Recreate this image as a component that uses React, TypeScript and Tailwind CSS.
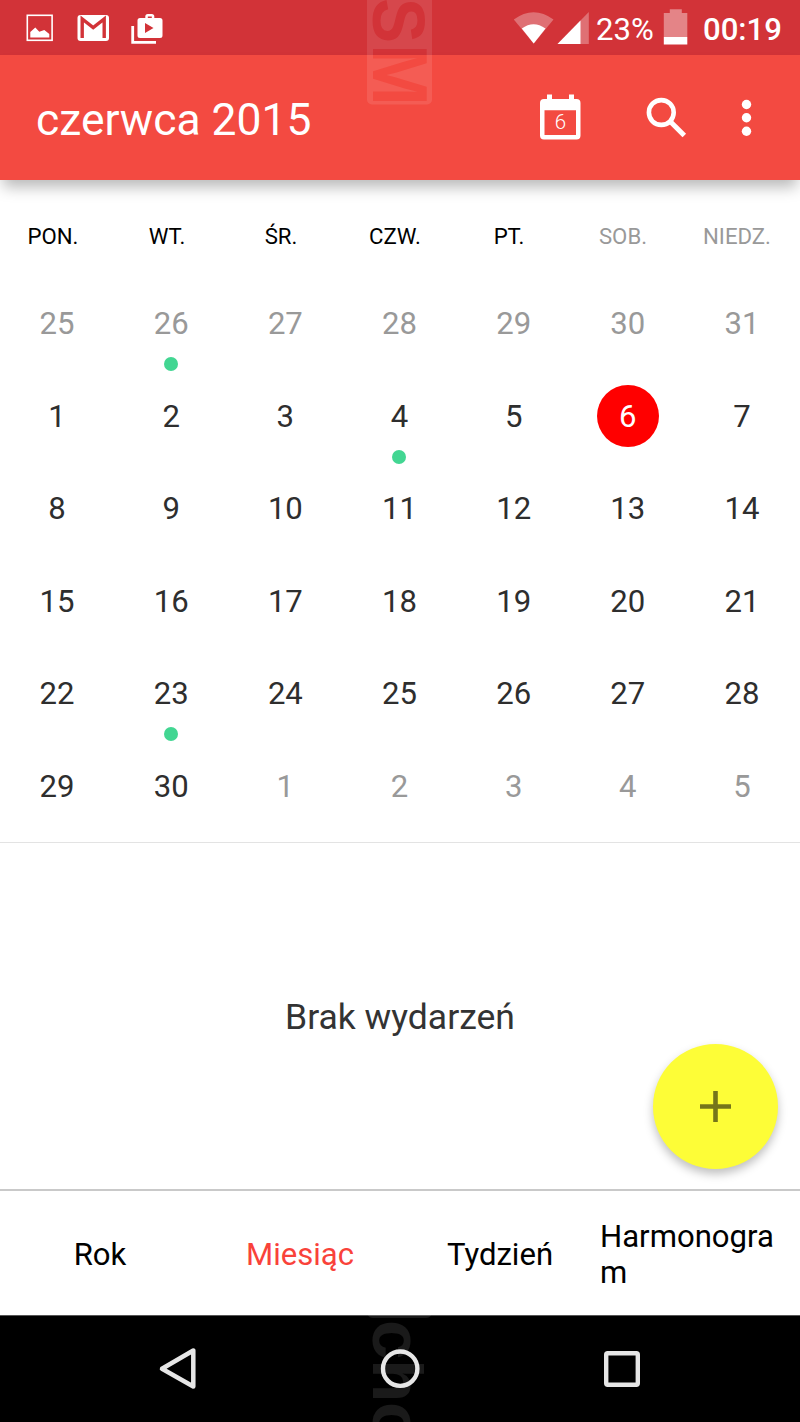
import React from "react";

const weekDays = ["PON.", "WT.", "ŚR.", "CZW.", "PT.", "SOB.", "NIEDZ."];

const weeks = [
  [25, 26, 27, 28, 29, 30, 31],
  [1, 2, 3, 4, 5, 6, 7],
  [8, 9, 10, 11, 12, 13, 14],
  [15, 16, 17, 18, 19, 20, 21],
  [22, 23, 24, 25, 26, 27, 28],
  [29, 30, 1, 2, 3, 4, 5],
];

// "week-column" of the days that have an event
const events = ["0-1", "1-3", "4-1"];

const StatusBar = () => {
  return (
    <div className="flex h-[55px] items-start justify-between bg-[#d23338] text-white">
      <svg width="190" height="55" viewBox="0 0 190 55">
        <rect x="27.3" y="15.3" width="24.8" height="25" fill="none" stroke="white" strokeWidth="1.6" />
        <path d="M30.3 37.5V32l5-4.5 4 4.3 5-1.8 5 4v3.5z" fill="white" />
        <rect x="77.5" y="15" width="31.5" height="26" rx="3" fill="white" />
        <path
          d="M82.2 38V19l11 8.500 11-8.500V38"
          fill="none"
          stroke="#d23338"
          strokeWidth="3.4"
        />
        <path d="M132.7 26v16.3H156" fill="none" stroke="white" strokeWidth="2.8" />
        <path
          fill="white"
          fillRule="evenodd"
          d="M140 18h5.3v-1.5q0-2.5 2.5-2.5h4q2.5 0 2.5 2.5V18h5.7q2.5 0 2.5 2.5V35.5q0 2.5-2.5 2.5H140q-2.5 0-2.5-2.5V20.5q0-2.5 2.5-2.5zM147.8 18h4v-1.500h-4zM145 23v10l8.500-5z"
        />
      </svg>
      <div className="flex h-[55px] items-start">
        <svg width="80" height="55" viewBox="510 0 80 55">
          <path d="M513.8 19.5Q533.5 5 553.5 19.5L533.7 43.5z" fill="white" fillOpacity="0.3" />
          <path d="M521.8 28.5Q533.5 20 545.5 28.5L533.7 43.5z" fill="white" />
          <path d="M588.8 12v32H557.5z" fill="white" fillOpacity="0.3" />
          <path d="M580.5 20.5V44H557.5z" fill="white" />
        </svg>
        <span className="ml-[6px] w-[67px] text-[31.1px] leading-[60px]">23%</span>
        <svg width="26" height="55" viewBox="663 0 26 55">
          <path d="M663.8 13h6V9.2h12V13h5.5v24h-23.5z" fill="white" fillOpacity="0.4" />
          <rect x="663.8" y="37" width="23.5" height="7.5" fill="white" />
        </svg>
        <span className="ml-[14px] w-[97px] text-[31.1px] font-medium leading-[60px]">00:19</span>
      </div>
    </div>
  );
};

const AppBar = () => {
  return (
    <div className="relative z-10 flex h-[125px] items-start justify-between bg-[#f34a41] text-white shadow-[0_10px_14px_-3px_rgba(0,0,0,0.28)]">
      <h1 className="pl-[36px] text-[44.4px] font-normal leading-[131px]">czerwca 2015</h1>
      <svg width="280" height="125" viewBox="520 55 280 125">
        <path
          fill="white"
          fillRule="evenodd"
          d="M544 99h3v-4.500h5V99h17v-4.500h5V99h2.500q4 0 4 4v32.500q0 4-4 4H544q-4 0-4-4V103q0-4 4-4zM544.500 110.300v24.700h31.500v-24.700z"
        />
        <text x="560.5" y="129" textAnchor="middle" fontSize="20.5" fontWeight="300" fill="white">
          6
        </text>
        <circle cx="661.3" cy="112.5" r="12.4" fill="none" stroke="white" strokeWidth="4.6" />
        <path d="M671 122.200l13.300 13.300" stroke="white" strokeWidth="5" />
        <circle cx="746.5" cy="104.5" r="4.7" fill="white" />
        <circle cx="746.5" cy="117.8" r="4.7" fill="white" />
        <circle cx="746.5" cy="131.2" r="4.7" fill="white" />
      </svg>
    </div>
  );
};

const Day = ({ day, week, col }: { day: number; week: number; col: number }) => {
  const outside = (week === 0 && day > 20) || (week === 5 && day < 20);
  const today = week === 1 && day === 6;
  return (
    <div className="relative flex items-center justify-center">
      <span
        className={
          today
            ? "flex size-[62px] items-center justify-center rounded-full bg-[#ff0000] pt-px text-white"
            : outside
              ? "text-[#999999]"
              : "text-[#2e2e2e]"
        }
      >
        {day}
      </span>
      {events.includes(`${week}-${col}`) && (
        <span className="absolute left-1/2 top-[80px] size-[14px] -translate-x-1/2 rounded-full bg-[#42d692]" />
      )}
    </div>
  );
};

const Month = () => {
  return (
    <div className="h-[663px] border-b border-[#e3e3e3] pt-[36px]">
      <div className="-ml-1 grid w-[798px] grid-cols-7 text-center text-[22.2px] leading-[41px]">
        {weekDays.map((name, i) => (
          <div key={name} className={i > 4 ? "text-[#999999]" : "text-black"}>
            {name}
          </div>
        ))}
      </div>
      <div className="mt-[20.4px] grid h-[555px] w-[799px] grid-cols-7 grid-rows-6 text-[31.1px] leading-[37px]">
        {weeks.map((week, w) =>
          week.map((day, c) => <Day key={`${w}-${c}`} day={day} week={w} col={c} />)
        )}
      </div>
    </div>
  );
};

const Tabs = () => {
  return (
    <div className="grid h-[126px] grid-cols-4 border-t-2 border-[#c9c9c9] text-[31.1px] leading-[36.5px] text-black">
      <div className="flex items-center justify-center pt-1">Rok</div>
      <div className="flex items-center justify-center pt-1 text-[#f9423a]">Miesiąc</div>
      <div className="flex items-center justify-center pt-1">Tydzień</div>
      <div className="flex items-center pt-1">
        <span className="break-all">Harmonogram</span>
      </div>
    </div>
  );
};

const NavBar = () => {
  return (
    <div className="h-[107px] border-t border-[#555555] bg-black">
      <svg width="800" height="106" viewBox="0 1316 800 106" fill="none" stroke="#e6e6e6">
        <path d="M193.3 1350.500v36L162 1368.800z" strokeWidth="4.5" strokeLinejoin="round" />
        <circle cx="400.2" cy="1368.7" r="17.2" strokeWidth="4.4" />
        <rect x="606.2" y="1353.2" width="31.6" height="31.6" rx="1.5" strokeWidth="4.4" />
      </svg>
    </div>
  );
};

// vertical GSMchoice watermark lying over the bars
const Watermark = () => {
  return (
    <svg
      className="pointer-events-none absolute left-0 top-0 z-20"
      width="800"
      height="1422"
      fontFamily="Liberation Sans"
      fontWeight="700"
    >
      <mask id="badge">
        <rect x="367" y="-60" width="65" height="164.5" rx="5" fill="white" />
        <text transform="translate(373 -2) rotate(90)" fontSize="74" textLength="45" lengthAdjust="spacingAndGlyphs" fill="black">
          S
        </text>
        <text transform="translate(373 44) rotate(90)" fontSize="78" textLength="62" lengthAdjust="spacingAndGlyphs" fill="black">
          M
        </text>
      </mask>
      <rect x="367" y="-60" width="65" height="165" fill="white" fillOpacity="0.1" mask="url(#badge)" />
      <path d="M368 1315h63q-1 3-5 3h-53q-4 0-5-3z" fill="white" fillOpacity="0.1" />
      <text x="0 39 82" transform="translate(373 1320) rotate(90)" fontSize="71" fill="white" fillOpacity="0.1">
        cho
      </text>
    </svg>
  );
};

const App = () => {
  return (
    <div className="relative h-[1422px] w-[800px] overflow-hidden bg-white font-[Roboto,sans-serif]">
      <StatusBar />
      <AppBar />
      <Month />
      <div className="flex h-[346px] items-center justify-center pt-[4px] text-[35.5px] text-[#333333]">
        Brak wydarzeń
      </div>
      <Tabs />
      <NavBar />
      <button
        aria-label="Dodaj"
        className="absolute left-[653px] top-[1044px] flex size-[125px] items-center justify-center rounded-full bg-[#fdfd37] shadow-[0_5px_10px_rgba(0,0,0,0.25)]"
      >
        <svg width="31" height="31" viewBox="0 0 31 31">
          <path d="M15.5 0v31M0 15.500h31" stroke="#75751a" strokeWidth="4.6" />
        </svg>
      </button>
      <Watermark />
    </div>
  );
};

export default App;
